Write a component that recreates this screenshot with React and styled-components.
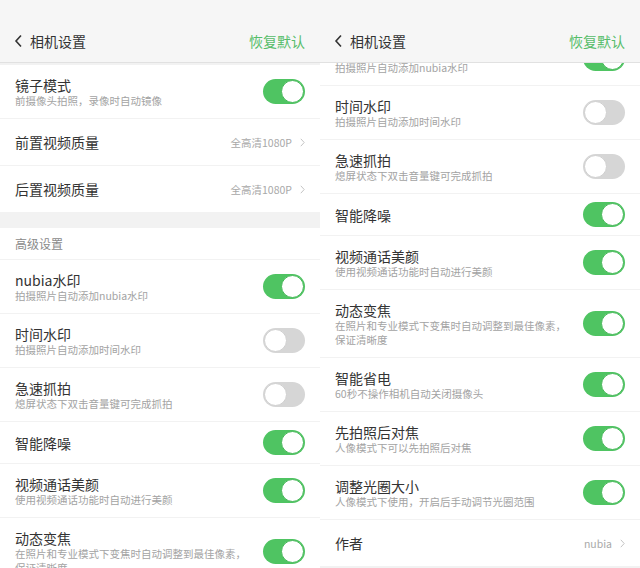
import React from 'react';
import styled, {createGlobalStyle} from 'styled-components';

const Global = createGlobalStyle`
    body {
        margin: 0;
        background: #fff;
        font-family: "Noto Sans CJK SC", "Noto Sans", sans-serif;
    }
`
const Screen = styled.div`
    display: flex;
    width: 640px;
    height: 568px;
    overflow: hidden;
`
const Panel = styled.div`
    width: 320px;
    height: 568px;
    display: flex;
    flex-direction: column;
    overflow: hidden;
    background: #f2f2f2;
`
const Header = styled.div`
    height: 42px;
    padding: 20px 15px 0 14px;
    display: flex;
    align-items: center;
    background: #f6f6f6;
    border-bottom: 1px solid #e1e1e1;
    position: relative;
    z-index: 1;
    flex-shrink: 0;
`
const Title = styled.div`
    flex: 1;
    display: flex;
    align-items: center;
    gap: 7px;
    font-size: 14px;
    color: #333;
`
const Reset = styled.div`
    font-size: 14px;
    color: #55bd69;
`
const List = styled.div`
    flex: 1;
    overflow: hidden;
`
const Inner = styled.div`
    display: flex;
    flex-direction: column;
    gap: 1px;
    margin-top: ${p => p.offset}px;
`
const Row = styled.div`
    display: flex;
    align-items: center;
    min-height: ${p => p.h}px;
    padding: 0 15px;
    background: #fff;
    flex-shrink: 0;
`
const Texts = styled.div`
    flex: 1;
    display: flex;
    flex-direction: column;
`
const Name = styled.div`
    font-size: 14px;
    line-height: 18px;
    color: #333;
`
const Desc = styled.div`
    font-size: 10.5px;
    line-height: 14px;
    color: #a3a3a3;
    white-space: nowrap;
`
const Section = styled.div`
    height: 31px;
    display: flex;
    align-items: center;
    padding: 0 15px;
    font-size: 12px;
    color: #8a8a8a;
    background: #fff;
    flex-shrink: 0;
`
const Gap = styled.div`
    height: 14px;
    flex-shrink: 0;
`
const Value = styled.div`
    display: flex;
    align-items: center;
    gap: 8px;
    font-size: 10.5px;
    color: #a8a8a8;
`
const Track = styled.div`
    width: 42px;
    height: 25px;
    border-radius: 13px;
    background: ${p => p.on ? '#4fc462' : '#d6d6d6'};
    display: flex;
    align-items: center;
    justify-content: ${p => p.on ? 'flex-end' : 'flex-start'};
    padding: 1px;
    box-sizing: border-box;
    flex-shrink: 0;
`
const Knob = styled.div`
    width: 23px;
    height: 23px;
    border-radius: 50%;
    background: #fff;
    box-sizing: border-box;
    border: 1px solid ${p => p.on ? '#46b858' : '#cfcfcf'};
`

const Back = () => (
    <svg width="9" height="14" viewBox="0 0 9 14">
        <polyline points="7,1.5 2,7 7,12.5" fill="none" stroke="#333" strokeWidth="1.6" />
    </svg>
)

const Chevron = () => (
    <svg width="5" height="9" viewBox="0 0 5 9">
        <polyline points="0.8,0.8 4.2,4.5 0.8,8.2" fill="none" stroke="#c4c4c4" strokeWidth="1" />
    </svg>
)

const Toggle = ({on}) => (
    <Track on={on}><Knob on={on} /></Track>
)

function Item({name, desc, on, value}) {
    const lines = desc ? (desc.length > 1 ? 3 : 2) : 1
    const h = value ? 46 : lines === 3 ? 67 : lines === 2 ? 53 : 41
    return (
        <Row h={h}>
            <Texts>
                <Name>{name}</Name>
                {desc && desc.map(d => <Desc key={d}>{d}</Desc>)}
            </Texts>
            {value ? <Value>{value}<Chevron /></Value> : <Toggle on={on} />}
        </Row>
    )
}

const advanced = [
    {name: 'nubia水印', desc: ['拍摄照片自动添加nubia水印'], on: true},
    {name: '时间水印', desc: ['拍摄照片自动添加时间水印'], on: false},
    {name: '急速抓拍', desc: ['熄屏状态下双击音量键可完成抓拍'], on: false},
    {name: '智能降噪', on: true},
    {name: '视频通话美颜', desc: ['使用视频通话功能时自动进行美颜'], on: true},
    {name: '动态变焦', desc: ['在照片和专业模式下变焦时自动调整到最佳像素，', '保证清晰度'], on: true},
    {name: '智能省电', desc: ['60秒不操作相机自动关闭摄像头'], on: true},
    {name: '先拍照后对焦', desc: ['人像模式下可以先拍照后对焦'], on: true},
    {name: '调整光圈大小', desc: ['人像模式下使用，开启后手动调节光圈范围'], on: true},
    {name: '作者', value: 'nubia'},
]

function Top() {
    return (
        <Header>
            <Title><Back />相机设置</Title>
            <Reset>恢复默认</Reset>
        </Header>
    )
}

export default function App() {
    return (
        <Screen>
            <Global />
            <Panel>
                <Top />
                <List>
                    <Inner offset={2}>
                        <Item name="镜子模式" desc={['前摄像头拍照，录像时自动镜像']} on />
                        <Item name="前置视频质量" value="全高清1080P" />
                        <Item name="后置视频质量" value="全高清1080P" />
                        <Gap />
                        <Section>高级设置</Section>
                        {advanced.slice(0, 6).map(i => <Item key={i.name} {...i} />)}
                    </Inner>
                </List>
            </Panel>
            <Panel>
                <Top />
                <List>
                    <Inner offset={-31}>
                        {advanced.map(i => <Item key={i.name} {...i} />)}
                    </Inner>
                </List>
            </Panel>
        </Screen>
    )
}
